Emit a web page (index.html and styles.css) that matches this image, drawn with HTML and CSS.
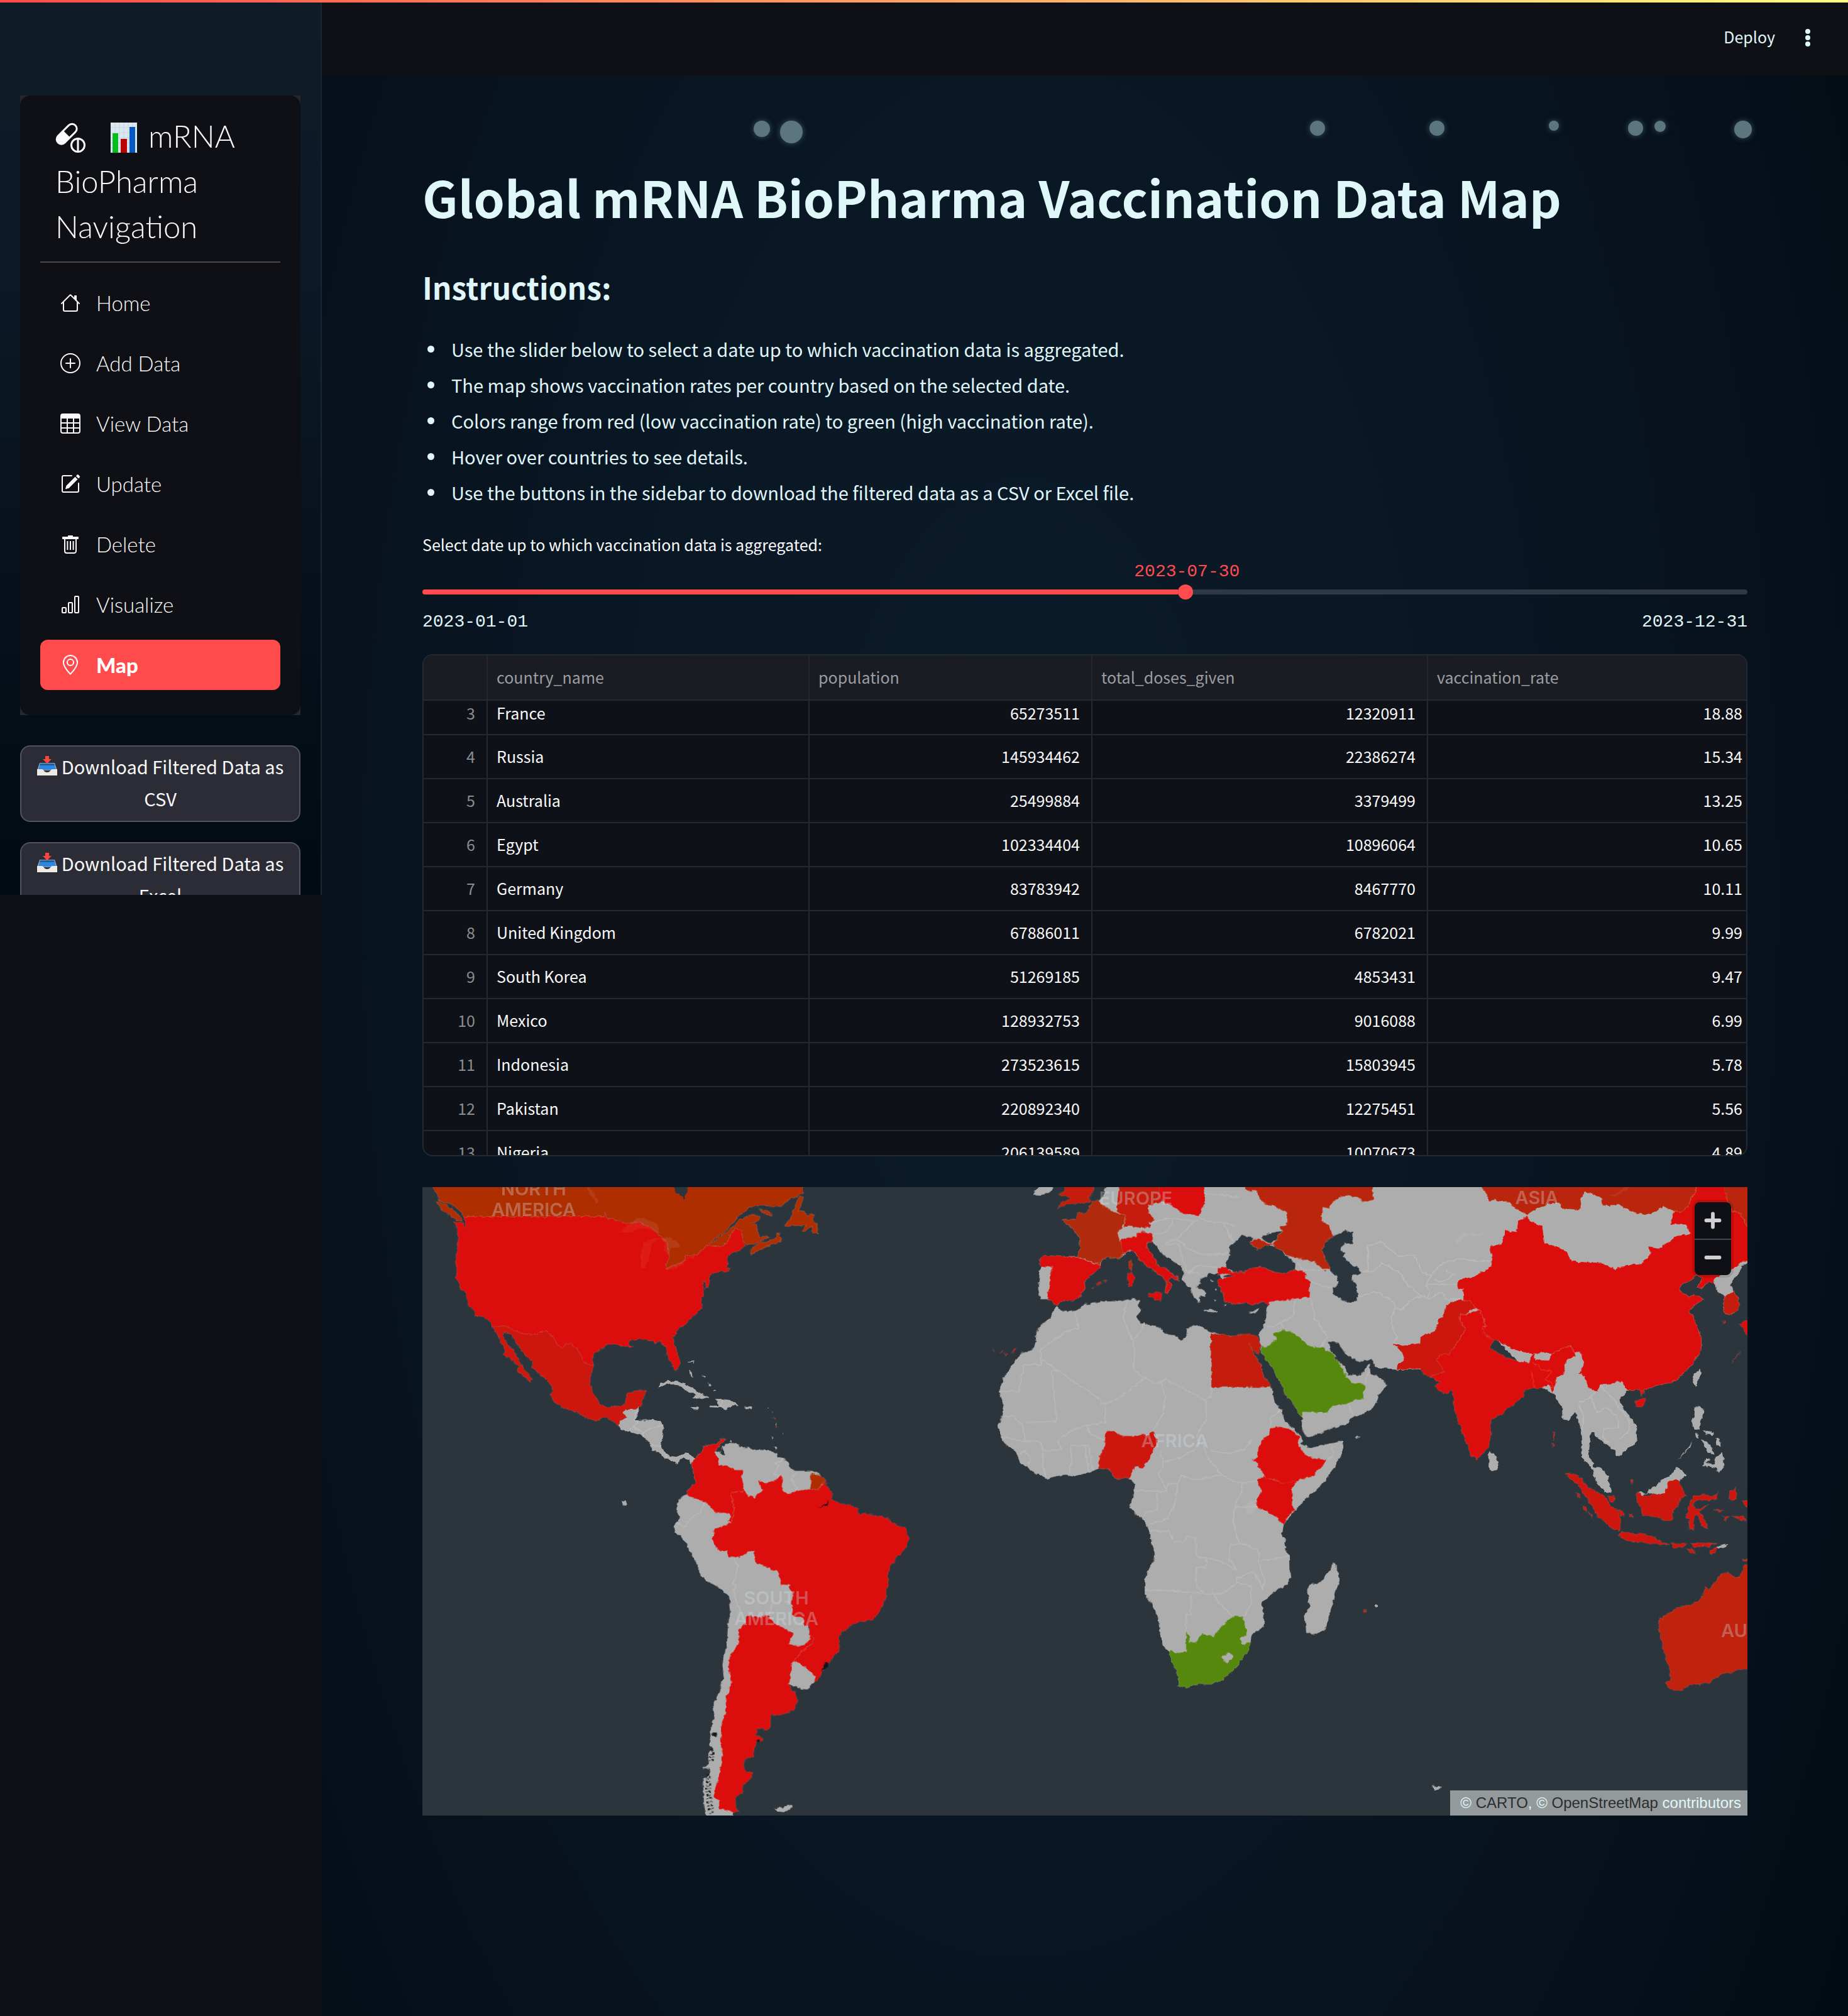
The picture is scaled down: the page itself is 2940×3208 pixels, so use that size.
FILE: index.html
```html
<!DOCTYPE html>
<html lang="en">
<head>
<meta charset="utf-8">
<title>Global mRNA BioPharma Vaccination Data Map</title>
<link rel="stylesheet" href="styles.css">
</head>
<body>
<svg class="defs" aria-hidden="true">
  <symbol id="tray" viewBox="0 0 32 32">
    <path d="M4 11h24l4 12H0z" fill="#8fa3b5"/>
    <path d="M5 12h22l3 10H2z" fill="#2f86dd"/>
    <path d="M5 12h22l1 3H4z" fill="#1d5ea6"/>
    <path d="M0 21h8c2 0 3 5 8 5s6-5 8-5h8v10H0z" fill="#eeebe6"/>
    <path d="M13 0h6v5h4l-7 7-7-7h4z" fill="#f8473c"/>
  </symbol>
</svg>
<div class="decoration"></div>
<div class="app">
  <aside class="sidebar">
    <div class="menu-frame">
      <nav class="menu">
        <h2 class="menu-title"><svg class="pill" viewBox="0 0 16 16" fill="currentColor"><path d="M11.02 5.364a3 3 0 0 0-4.242-4.243L1.121 6.778a3 3 0 1 0 4.243 4.243l5.657-5.657Zm-6.413-.657 2.878-2.879a2 2 0 1 1 2.829 2.829L7.435 7.536 4.607 4.707ZM12 8a4 4 0 1 1 0 8 4 4 0 0 1 0-8Zm-.5 1.042a3 3 0 0 0 0 5.917V9.042Zm1 5.917a3 3 0 0 0 0-5.917v5.917Z"/></svg><svg class="chart" viewBox="0 0 42 48"><rect width="42" height="48" fill="#dce8f0"/><path d="M0 8h42M0 16h42M0 24h42M0 32h42M0 40h42M7 0v48M14 0v48M21 0v48M28 0v48M35 0v48" stroke="#c5d6e2" fill="none"/><rect x="3" y="17" width="9" height="31" fill="#07bd1c"/><rect x="16" y="26" width="10" height="22" fill="#b90404"/><rect x="30" y="7" width="9" height="41" fill="#0558c4"/></svg>mRNA BioPharma Navigation</h2>
        <ul class="menu-list">
          <li><a href="#home"><svg viewBox="0 0 16 16"><path d="M2 13.5V7h1v6.5a.5.5 0 0 0 .5.5h9a.5.5 0 0 0 .5-.5V7h1v6.5a1.5 1.5 0 0 1-1.5 1.5h-9A1.5 1.5 0 0 1 2 13.5zm11-11V6l-2-2V2.5a.5.5 0 0 1 .5-.5h1a.5.5 0 0 1 .5.5z"/><path d="M7.293 1.5a1 1 0 0 1 1.414 0l6.647 6.646a.5.5 0 0 1-.708.708L8 2.207 1.354 8.854a.5.5 0 1 1-.708-.708L7.293 1.5z"/></svg>Home</a></li>
          <li><a href="#add"><svg viewBox="0 0 16 16"><path d="M8 15A7 7 0 1 1 8 1a7 7 0 0 1 0 14zm0 1A8 8 0 1 0 8 0a8 8 0 0 0 0 16z"/><path d="M8 4a.5.5 0 0 1 .5.5v3h3a.5.5 0 0 1 0 1h-3v3a.5.5 0 0 1-1 0v-3h-3a.5.5 0 0 1 0-1h3v-3A.5.5 0 0 1 8 4z"/></svg>Add Data</a></li>
          <li><a href="#view"><svg viewBox="0 0 16 16"><path d="M0 2a2 2 0 0 1 2-2h12a2 2 0 0 1 2 2v12a2 2 0 0 1-2 2H2a2 2 0 0 1-2-2V2zm15 2h-4v3h4V4zm0 4h-4v3h4V8zm0 4h-4v3h3a1 1 0 0 0 1-1v-2zm-5 3v-3H6v3h4zm-5 0v-3H1v2a1 1 0 0 0 1 1h3zm-4-4h4V8H1v3zm0-4h4V4H1v3zm5-3v3h4V4H6zm4 4H6v3h4V8z"/></svg>View Data</a></li>
          <li><a href="#update"><svg viewBox="0 0 16 16"><path d="M15.502 1.94a.5.5 0 0 1 0 .706L14.459 3.69l-2-2L13.502.646a.5.5 0 0 1 .707 0l1.293 1.293zm-1.75 2.456-2-2L4.939 9.21a.5.5 0 0 0-.121.196l-.805 2.414a.25.25 0 0 0 .316.316l2.414-.805a.5.5 0 0 0 .196-.12l6.813-6.814z"/><path d="M1 13.5A1.5 1.5 0 0 0 2.5 15h11a1.5 1.5 0 0 0 1.5-1.5v-6a.5.5 0 0 0-1 0v6a.5.5 0 0 1-.5.5h-11a.5.5 0 0 1-.5-.5v-11a.5.5 0 0 1 .5-.5H9a.5.5 0 0 0 0-1H2.5A1.5 1.5 0 0 0 1 2.5v11z"/></svg>Update</a></li>
          <li><a href="#delete"><svg viewBox="0 0 16 16"><path d="M6 1.500a.5.5 0 0 1 .5-.5h3a.5.5 0 0 1 .5.5V2H6z"/><path d="M3.500 4v9.500a1.500 1.500 0 0 0 1.500 1.500h6a1.500 1.500 0 0 0 1.500-1.500V4M2 2.500h12v1H2zM5.700 5.500v7M8 5.500v7M10.300 5.500v7" fill="none" stroke="currentColor" stroke-linejoin="round"/></svg>Delete</a></li>
          <li><a href="#visualize"><svg viewBox="0 0 16 16"><path d="M4 11H2v3h2v-3zm5-4H7v7h2V7zm5-5v12h-2V2h2zm-2-1a1 1 0 0 0-1 1v12a1 1 0 0 0 1 1h2a1 1 0 0 0 1-1V2a1 1 0 0 0-1-1h-2zM6 7a1 1 0 0 1 1-1h2a1 1 0 0 1 1 1v7a1 1 0 0 1-1 1H7a1 1 0 0 1-1-1V7zm-5 4a1 1 0 0 1 1-1h2a1 1 0 0 1 1 1v3a1 1 0 0 1-1 1H2a1 1 0 0 1-1-1v-3z"/></svg>Visualize</a></li>
          <li><a href="#map" class="active" aria-current="page"><svg viewBox="0 0 16 16"><path d="M12.166 8.94c-.524 1.062-1.234 2.12-1.96 3.07A31.493 31.493 0 0 1 8 14.58a31.481 31.481 0 0 1-2.206-2.57c-.726-.95-1.436-2.008-1.96-3.07C3.304 7.867 3 6.862 3 6a5 5 0 0 1 10 0c0 .862-.305 1.867-.834 2.94zM8 16s6-5.686 6-10A6 6 0 0 0 2 6c0 4.314 6 10 6 10z"/><path d="M8 8a2 2 0 1 1 0-4 2 2 0 0 1 0 4zm0 1a3 3 0 1 0 0-6 3 3 0 0 0 0 6z"/></svg>Map</a></li>
        </ul>
      </nav>
    </div>
    <button class="download" type="button"><svg class="tray"><use href="#tray"/></svg>Download Filtered Data as CSV</button>
    <button class="download" type="button"><svg class="tray"><use href="#tray"/></svg>Download Filtered Data as Excel</button>
  </aside>

  <div class="page">
    <header class="toolbar">
      <button type="button" class="deploy">Deploy</button>
      <button type="button" class="more" aria-label="Menu"><svg viewBox="0 0 8 28"><circle cx="4" cy="4" r="4"/><circle cx="4" cy="14" r="4"/><circle cx="4" cy="24" r="4"/></svg></button>
    </header>
    <main class="content">
      <div class="bubbles" aria-hidden="true">
        <i style="left:25%;width:26px;height:26px"></i><i style="left:27%;width:36px;height:36px"></i><i style="left:67%;width:24px;height:24px"></i><i style="left:76%;width:24px;height:24px"></i><i style="left:85%;width:16px;height:16px"></i><i style="left:91%;width:24px;height:24px"></i><i style="left:93%;width:18px;height:18px"></i><i style="left:99%;width:28px;height:28px"></i>
      </div>
      <h1>Global mRNA BioPharma Vaccination Data Map</h1>
      <h2 class="subhead">Instructions:</h2>
      <ul class="instructions">
        <li>Use the slider below to select a date up to which vaccination data is aggregated.</li>
        <li>The map shows vaccination rates per country based on the selected date.</li>
        <li>Colors range from red (low vaccination rate) to green (high vaccination rate).</li>
        <li>Hover over countries to see details.</li>
        <li>Use the buttons in the sidebar to download the filtered data as a CSV or Excel file.</li>
      </ul>

      <div class="slider">
        <label for="date">Select date up to which vaccination data is aggregated:</label>
        <output for="date" style="margin-left:57.7%">2023-07-30</output>
        <input id="date" type="range" min="0" max="364" value="210">
        <div class="ticks"><span>2023-01-01</span><span>2023-12-31</span></div>
      </div>

      <div class="grid">
        <table>
          <colgroup><col class="c-index"><col class="c-name"><col class="c-pop"><col class="c-doses"><col></colgroup>
          <thead><tr><th></th><th>country_name</th><th>population</th><th>total_doses_given</th><th>vaccination_rate</th></tr></thead>
          <tbody>
            <tr class="scrolled"><td>3</td><td>France</td><td>65273511</td><td>12320911</td><td>18.88</td></tr>
            <tr><td>4</td><td>Russia</td><td>145934462</td><td>22386274</td><td>15.34</td></tr>
            <tr><td>5</td><td>Australia</td><td>25499884</td><td>3379499</td><td>13.25</td></tr>
            <tr><td>6</td><td>Egypt</td><td>102334404</td><td>10896064</td><td>10.65</td></tr>
            <tr><td>7</td><td>Germany</td><td>83783942</td><td>8467770</td><td>10.11</td></tr>
            <tr><td>8</td><td>United Kingdom</td><td>67886011</td><td>6782021</td><td>9.99</td></tr>
            <tr><td>9</td><td>South Korea</td><td>51269185</td><td>4853431</td><td>9.47</td></tr>
            <tr><td>10</td><td>Mexico</td><td>128932753</td><td>9016088</td><td>6.99</td></tr>
            <tr><td>11</td><td>Indonesia</td><td>273523615</td><td>15803945</td><td>5.78</td></tr>
            <tr><td>12</td><td>Pakistan</td><td>220892340</td><td>12275451</td><td>5.56</td></tr>
            <tr><td>13</td><td>Nigeria</td><td>206139589</td><td>10070673</td><td>4.89</td></tr>
          </tbody>
        </table>
      </div>

      <div class="map">
        <svg class="world" viewBox="0 0 2108 1000" role="img" aria-label="Vaccination rates by country">
          <defs>
            <filter id="coast" x="0" y="0" width="2108" height="1000" filterUnits="userSpaceOnUse">
              <feTurbulence type="fractalNoise" baseFrequency=".14" numOctaves="2" seed="4"/>
              <feDisplacementMap in="SourceGraphic" scale="6" xChannelSelector="R" yChannelSelector="G"/>
            </filter>
          </defs>
          <g filter="url(#coast)">
            <!-- North and Central America -->
            <g transform="translate(-12 -9) scale(.5102 .3333)">
              <path class="canada" d="M45,0L60,45 74,60 72,90 95,100 115,110 130,130 145,145 152,168H590L592,152 598,175 630,185 650,198 680,200 698,193 730,215 752,240 772,270 788,300 793,360 780,400 785,418 815,400 845,380 848,355 878,352 908,310 962,308 975,290 985,250 1000,225 1018,232 1022,280 1032,300 1060,300 1072,290 1105,270 1100,262 1075,262 1065,230 1068,210 1045,200 1062,200 1075,185 1075,168 1060,157 1040,162 1010,185 990,215 975,240 940,275 916,303 935,275 970,240 988,205 1010,165 1030,145 1042,120 1085,116 1145,120 1160,90 1190,75 1210,55 1208,0ZM1048,355L1045,330 1058,308 1075,290 1105,285 1125,268 1130,245 1138,245 1135,265 1145,272 1140,290 1110,300 1085,320 1065,335ZM1200,70L1212,75 1205,110 1195,140 1215,145 1225,160 1245,155 1242,185 1255,200 1255,250 1240,245 1238,215 1215,240 1205,238 1220,210 1153,212 1170,180 1180,140 1190,95ZM1075,133L1100,140 1115,158 1108,163 1085,150ZM65,97L95,105 118,135 145,170 148,190 130,185 110,160 80,130Z"/>
              <path class="sea" d="M798,0L812,50 830,70 840,85 850,50 850,0Z"/>
              <path class="low" d="M122,192L152,198 158,225 160,205 152,168H590L592,152 598,175 630,185 650,198 680,200 698,193 730,215 752,240 772,270 788,300 793,360 780,400 785,418 815,400 845,380 848,355 878,352 908,310 962,308 975,290 985,250 1000,225 1018,232 1022,280 1032,310 1010,330 985,345 973,370 978,395 970,410 985,415 975,430 950,430 920,450 918,490 905,512 908,480 900,475 900,530 892,575 895,605 880,630 860,655 840,685 815,715 806,745 808,780 822,830 827,870 820,898 810,898 798,860 785,825 782,790 765,765 750,775 740,760 700,752 670,760 665,775 683,790 660,790 640,780 600,775 580,800 560,820 553,850 558,880 525,865 520,835 500,790 485,772 472,775 462,795 443,780 435,750 412,717H383V730H340L280,690 242,695 235,670 210,645 188,640 185,620 165,580 160,540 145,515 137,480 128,460 132,420 126,380 134,300 135,250 130,220Z"/>
              <path class="mexico" d="M242,695L280,690 340,730H383V717H412L435,750 443,780 462,795 472,775 485,772 500,790 520,835 525,865 558,880 550,920 547,970 560,1020 578,1060 600,1080 640,1070 658,1055 663,1010 685,997 720,995 718,1020 708,1050 705,1075 690,1088 655,1090 650,1105 662,1125 640,1140 636,1170 620,1150 600,1128 590,1128 568,1143 530,1125 480,1085 460,1080 430,1045 425,1020 430,995 420,965 400,930 365,885 365,860 345,830 325,790 310,760 305,735 280,718 275,735 290,780 310,810 325,860 345,905 365,945 360,960 345,935 320,905 325,880 290,840 275,825 285,815 268,770 255,725Z"/>
              <path class="none" d="M636,1170L640,1140 662,1125 650,1105 655,1090 690,1088 700,1073 697,1110 688,1140 740,1137 765,1145 777,1165 773,1210 767,1255 775,1285 795,1310 815,1315 845,1297 865,1310 872,1325 862,1350 850,1325 840,1315 825,1330 822,1350 812,1345 800,1330 780,1325 760,1290 738,1285 735,1258 710,1215 680,1200 645,1185ZM757,985L765,965 790,950 825,957 860,980 890,1010 918,1028 905,1037 865,1035 878,1020 850,1000 825,975 795,965ZM932,1038L960,1038 985,1045 1010,1068 985,1075 968,1090 955,1080 918,1078 920,1070 948,1070 942,1050ZM855,1077L880,1078 887,1086 870,1088ZM1030,1073L1053,1074 1050,1084 1030,1084ZM857,900L863,908 866,935 860,925ZM848,860L868,854 873,876 866,862ZM895,925l12,6-2,6zM915,960l8,14-5,0zM930,1005l8,-10 2,6zM1095,1080l8,2v5zM1112,1095l6,8v6zM1125,1150l3,12-3,0zM1115,1215l3,12-4,2zM645,1522l10,6 8,14-14,6zM983,1230l5,5-2,10-4,-4z"/>
              <path class="lake" d="M637,245L665,205 700,170 752,200 765,245 752,240 700,222 665,245ZM705,415L703,340 715,290 745,272 770,275 740,290 735,330 728,370 715,420ZM765,265L800,268 830,310 815,320 800,315 790,350 775,330 780,300ZM780,418L800,400 845,375 840,395 800,422ZM535,0L560,60 572,90 568,108 545,60 530,0ZM845,365L880,350 870,368Z"/>
              <path class="border" d="M692,1090L685,1140 695,1150 680,1170 710,1200 720,1190 745,1175 777,1160M738,1255L767,1265M780,1295L783,1322M960,1040L955,1080M680,1170L670,1190M712,1215V1195"/>
            </g>

            <!-- South America -->
            <g transform="translate(348 331) scale(.3333 .4337)">
              <path class="none" d="M240,255L255,232 290,210 298,190 330,182 360,178 385,160 400,160 398,168 378,178 365,195 355,210 380,205 383,190 400,185 430,175 468,180 470,190 520,193 550,200 600,202 645,212 650,225 685,235 705,250 710,265 740,280 810,280 850,288 870,312 840,400 800,700 800,850 835,1032 825,1052 795,1080 760,1078 708,1060 690,1100 600,1150 520,1250 440,1400 440,1500 440,1580 320,1580 300,1500 295,1410 320,1400 330,1370 295,1372 320,1350 320,1310 345,1300 325,1282 340,1200 350,1185 343,1135 360,1110 380,1070 393,1030 388,990 395,950 410,905 415,830 427,790 420,738 380,710 310,680 278,655 275,635 215,545 185,515 163,505 157,475 190,450 168,430 170,400 190,375 215,362 225,345 258,322 250,290ZM640,1520L660,1510 680,1515 700,1500 722,1505 710,1520 680,1530 650,1528ZM630,192l18,-2v12zM424,165l8,2-2,8zM677,138l6,4-4,2z"/>
              <path class="sea" d="M378,205L390,193 402,215 385,220Z"/>
              <path class="border" d="M168,470L210,482 230,455 280,430 302,400 295,388M440,597L460,625 450,670 435,690 455,695 440,720 460,770 480,800M685,235L640,250 660,258 635,290 665,298M738,285L718,310 750,350M680,755L710,760M612,805L625,765"/>
              <path class="low" d="M240,255L255,232 290,210 298,190 330,182 360,178 385,160 400,160 398,168 378,178 365,195 350,215 368,232 370,258 410,260 445,275 488,275 480,300 490,335 495,352 430,357 430,380 442,400 440,435 430,468 412,462 425,450 425,437 395,432 355,433 340,415 300,390 250,380 215,362 225,345 258,322 250,290Z"/>
              <path class="low" d="M430,357L495,352 515,370 540,375 585,348 570,340 558,312 600,322 655,305 668,295 677,320 672,345 700,365 740,352 805,345 845,347 880,312 885,335 912,360 910,385 950,395 985,402 1030,415 1045,440 1065,433 1130,445 1175,450 1210,475 1260,487 1277,530 1265,560 1220,595 1190,630 1178,650 1178,690 1170,730 1155,770 1130,800 1105,825 1050,830 1000,845 945,880 945,935 910,970 860,1020 840,1050 825,1052 833,1032 780,998 745,978 722,978 775,935 820,910 820,890 800,880 807,850 780,845 770,815 725,812 718,760 725,730 708,710 708,697 668,695 660,675 658,648 625,640 550,615 540,600 540,572 510,577 470,595 415,595 413,570 375,575 335,530 355,490 420,470 430,468 440,435 442,400 430,380Z"/>
              <path class="canada" d="M810,287L850,292 877,312 845,347 805,345 812,320 805,300ZM628,83l10,3 0,6zM642,110l6,6-4,4z"/>
              <path class="low" d="M520,805L565,815 568,822 575,810 605,810 640,838 725,875 705,913 745,920 775,918 800,900 805,880 820,890 820,910 775,935 722,978 712,1030 708,1060 712,1078 738,1090 735,1105 748,1120 730,1155 690,1168 615,1175 618,1215 600,1228 550,1222 550,1250 580,1255 580,1270 552,1270 540,1295 535,1325 500,1335 485,1360 500,1383 530,1385 525,1405 490,1430 482,1460 450,1475 450,1510 467,1532 372,1520 372,1485 345,1475 360,1435 385,1350 388,1310 380,1270 385,1200 405,1165 403,1120 418,1085 430,1050 415,1000 430,945 468,910 463,860 500,840 500,815Z"/>
              <path class="shadow" d="M858,1015L880,980 897,980 888,1000ZM550,1268l12,-6 6,6-10,6zM848,418L880,400 895,385 885,405ZM335,1240l30,0-12,15z"/>
              <path class="fjords" d="M338,1300L325,1345M320,1390L312,1440 318,1500 330,1540M330,1400L326,1460 340,1530M345,1310L340,1350"/>
            </g>

            <!-- Europe, Africa and the Middle East -->
            <g transform="translate(888 -9) scale(.44643 .33333)">
              <path class="none" d="M270,597L280,612 300,620 340,618 375,585 440,570 500,568 545,560 570,572 560,590 572,615 555,650 575,680 620,688 645,700 655,725 690,735 715,760 733,740 735,705 755,687 780,690 800,708 823,718 865,728 895,742 930,728 957,770 975,820 1000,880 1010,930 1035,980 1045,1050 1075,1095 1085,1150 1110,1170 1135,1210 1150,1240 1140,1250 1175,1275 1210,1260 1260,1248 1290,1238 1293,1270 1280,1315 1255,1375 1230,1425 1200,1470 1150,1525 1120,1570 1090,1620 1080,1640 1075,1680 1085,1720 1088,1760 1102,1785 1103,1850 1107,1890 1090,1925 1045,1960 1000,2015 1010,2060 1010,2125 965,2165 962,2200 955,2240 935,2270 910,2320 855,2385 820,2400 770,2400 730,2420 705,2405 703,2350 680,2290 670,2245 650,2220 640,2170 633,2085 610,2020 585,1965 585,1900 600,1850 620,1800 620,1770 608,1730 612,1715 595,1650 585,1625 545,1580 532,1547 545,1500 550,1450 540,1425 525,1415 480,1420 460,1375 425,1370 390,1385 335,1410 290,1400 235,1420 180,1380 140,1340 125,1290 80,1245 70,1210 62,1165 75,1130 82,1060 65,1005 80,945 115,870 140,825 190,795 198,755 195,735 210,690 250,650 262,610ZM1258,1820L1275,1860 1280,1905 1265,1960 1245,2060 1225,2145 1190,2165 1160,2150 1158,2110 1152,2075 1173,2030 1165,1950 1175,1925 1215,1910 1240,1860ZM1330,1220L1355,1220 1340,1228Z"/>
              <path class="none" d="M455,0L435,70 420,95 400,95 395,130 375,150 345,160 340,180 290,185 310,205 335,235 352,270 355,320 345,360 300,360 230,352 207,372 215,400 210,450 205,510 212,562 237,562 255,575 270,593 285,573 330,572 355,545 372,510 365,485 390,450 428,410 430,375 455,362 490,370 525,335 545,330 565,370 590,400 620,430 650,455 665,490 655,530 665,535 682,495 670,480 680,455 705,475 700,455 670,430 660,410 640,410 615,355 595,320 595,290 615,285 625,310 650,350 685,380 715,405 725,440 720,475 745,510 755,540 775,580 785,575 780,550 805,545 795,520 770,500 785,490 780,465 805,455 815,440 845,440 860,470 850,500 865,545 870,575 905,585 945,580 970,590 1010,572 1028,590 1018,605 1018,650 1005,700 990,735 998,790 1000,820 1030,870 1050,920 1075,970 1085,1020 1110,1050 1125,1090 1145,1125 1145,1180 1160,1218 1195,1212 1240,1185 1310,1155 1315,1135 1385,1095 1410,1060 1420,1020 1450,970 1425,935 1390,920 1385,870 1355,925 1310,925 1295,880 1275,860 1245,800 1240,765 1275,770 1300,825 1350,862 1395,847 1405,885 1485,900 1568,895V0ZM188,65L195,40 220,20 258,20 255,45 210,68ZM797,612L845,618 840,626 800,621ZM955,625L995,605 980,628 960,634ZM820,470l10,6-8,5zM835,510l8,6-6,5zM830,560l12,8-8,6zM865,590l12,-4-4,14z"/>
              <path class="sea" d="M930,255L905,290 890,305 888,350 873,390 880,420 905,433 940,433 970,412 1005,410 1040,432 1075,440 1120,425 1122,395 1090,355 1050,308 1015,305 985,325 960,292 975,272ZM1000,270L1020,250 1078,235 1060,258 1062,272 1035,292 1010,285ZM1255,262L1300,237 1328,242 1325,295 1295,297 1282,325 1300,345 1290,360 1325,405 1342,408 1357,438 1328,442 1320,470 1340,490 1343,570 1305,575 1258,545 1255,505 1275,490 1270,455 1250,430 1228,370 1215,325 1230,290ZM862,452L895,440 908,450 880,458Z"/>
              <path class="germany" d="M295,0L300,45 278,62 300,70 320,80 290,100 275,127 310,108 350,105 395,98 385,75 400,60 402,0ZM495,0H640L650,95 597,115 600,150 618,180 605,200 605,220 570,222 540,215 512,215 518,165 485,145 487,100Z"/>
              <path class="low" d="M636,0H797L800,100 780,162 720,155 695,125 655,100 636,60ZM497,280L530,265 555,265 560,245 585,240 612,255 615,285 595,290 595,320 615,355 640,410 660,410 670,430 700,455 705,475 680,455 670,480 682,495 665,535 655,530 665,490 650,455 620,430 590,400 565,370 550,335 530,328 510,348 500,320ZM597,535L648,530 642,572 600,550ZM522,440L540,432 548,460 540,500 525,503 525,470ZM207,372L230,352 300,360 345,362 400,390 428,397 428,410 390,450 365,485 372,510 355,545 330,572 285,573 270,593 255,575 237,560 245,500 247,440 258,410 215,405ZM413,488l18,-8 0,10-8,4zM440,475l8,-2-4,6zM395,505l6,0-2,6zM848,412L878,408 885,430 905,433 940,433 970,412 1005,410 1040,432 1075,440 1120,425 1158,430 1160,465 1175,480 1170,555 1130,558 1070,570 1028,575 1025,597 1010,572 970,590 945,580 905,585 870,575 865,545 850,500 845,470 870,460 905,450 880,438 845,450ZM66,815l12,-6 0,8zM86,822l8,2-4,6zM112,815l12,-20 4,0-8,16zM45,800l4,5-2,4z"/>
              <path class="france" d="M400,95L420,90 440,120 485,150 518,165 510,210 488,245 500,300 510,345 490,370 455,362 430,375 425,397 345,360 355,320 352,270 335,235 310,205 290,185 340,180 345,150 375,150ZM530,385L540,378 542,400 535,425 528,410Z"/>
              <path class="russia" d="M943,0L945,45 985,45 990,75 1012,110 1050,120 1092,150 1090,205 1065,215 1078,240 1060,258 1062,272 1040,300 1060,320 1095,355 1150,372 1195,390 1230,430 1247,410 1228,370 1215,325 1230,290 1255,262 1245,215 1213,185 1220,120 1245,130 1250,100 1300,65 1350,80 1360,100 1410,85 1440,105 1480,100 1478,75 1465,60 1468,0ZM960,292L988,270 1010,290 1045,298 1010,310 985,325ZM1367,2043h10v12h-10z"/>
              <path class="high" d="M1040,725L1080,708 1110,720 1175,790 1228,795 1232,808 1245,808 1275,860 1300,920 1320,958 1368,968 1372,985 1362,1035 1310,1058 1255,1070 1225,1110 1210,1103 1150,1100 1145,1125 1125,1090 1110,1050 1085,1020 1075,970 1050,920 1030,870 1000,820 1000,788 1022,790 1055,750Z"/>
              <path class="germany" d="M820,725L865,728 895,742 930,728 985,735 998,790 990,825 970,800 957,770 975,820 1000,880 1010,930 1038,982H822Z"/>
              <path class="mexico" d="M447,1197L475,1190 500,1215 545,1215 600,1205 615,1193 632,1240 600,1330 575,1368 550,1360 530,1415 480,1420 460,1375 422,1370 422,1315 440,1270Z"/>
              <path class="low" d="M1030,1180L1055,1170 1090,1175 1120,1195 1135,1220 1130,1255 1150,1290 1165,1310 1235,1333 1185,1405 1125,1430 1080,1442 1045,1420 1017,1420 985,1345 968,1330 987,1320 990,1270 1005,1230 1025,1215ZM985,1425L1010,1408 1020,1420 1045,1422 1080,1442 1125,1430 1110,1460 1110,1545 1120,1567 1095,1600 1080,1640 1050,1600 983,1550 985,1520 1002,1480Z"/>
              <path class="high" d="M670,2245L680,2235 690,2252 732,2245V2147L745,2175 745,2200 765,2200 790,2160 830,2172 860,2120 885,2090 905,2075 935,2080 947,2130 948,2172 930,2175 928,2200 940,2212 950,2200 963,2200 955,2240 935,2270 910,2320 855,2385 820,2400 770,2400 730,2420 705,2405 703,2350 680,2290Z"/>
              <path class="none" d="M860,2270L885,2248 902,2265 878,2303Z"/>
              <path class="lake" d="M945,1545L955,1525 985,1520 975,1590 945,1590Z"/>
              <path class="border" d="M337,622L350,700 305,715 215,800V875H155L137,1000H65M215,847L430,1045 432,1060 480,1045 585,940 555,915 545,870 550,800 540,750 508,655 522,570M580,675V700L545,755M585,940L630,965 660,943 803,1045V1140L770,1210 780,1260M822,982V1033H805M253,903H283M253,903L272,1145 160,1150M445,1058V1150L375,1165 395,1210 440,1235M643,960L657,1025 650,1110 615,1185M75,1120L115,1120 150,1165 160,1240 70,1218M1070,1088L1035,1130 1030,1180M160,1240L210,1240 225,1285 290,1280 275,1240 320,1190 375,1165M317,1260L390,1258M320,1262L325,1340 315,1390M370,1262L385,1380M385,1265L400,1380M225,1290L220,1350 235,1415M138,1300L160,1285 180,1320 170,1350M650,1340L710,1320 765,1280M640,1290L652,1345 635,1400 665,1480M550,1475L660,1480 668,1445 705,1440 715,1405 770,1425 860,1400 805,1310 795,1260M860,1400L885,1420 930,1440 980,1430M820,1285L880,1300 940,1280 965,1230M705,1440L690,1540 665,1610 600,1640M580,1600L590,1580 630,1570 630,1490M600,1668L670,1670 690,1720 720,1720 740,1695 765,1705 772,1795 805,1795 870,1820 908,1855 905,1830 885,1810 890,1735 925,1730M905,1560L900,1620 920,1720 990,1760M905,1555L985,1550M930,1440L930,1480 905,1555M1000,1810L1100,1790M990,1760L995,1850 1015,1900 1005,1945 990,1900 970,1860 915,1895 915,1915 965,1935 962,2020 938,2080M585,1950L705,1955 770,1965 860,1970 915,1915M805,1795L803,1843H768V1930L795,1960M750,1975V2070H732V2147M825,1960L850,2010 895,2075M1255,1265V1310L1235,1333"/>
              <path class="border" d="M800,55L925,75M780,165L800,190 860,195 905,215M600,200L670,175 775,190M680,175L685,205 650,250 615,250M760,190L700,275 660,290M700,275L740,320 790,350 885,345M860,190L900,285M655,300L705,300 720,370 735,430 780,440M740,440L770,400 845,410M1020,690L1040,695 1115,640 1118,570M1070,672L1080,708M1178,560L1190,650 1235,740 1215,790M1175,480L1250,510M1130,390L1150,425 1240,420M1380,430V305L1425,290 1490,355H1535M1310,1065L1328,1115M1370,965L1385,905"/>
            </g>

            <!-- Asia -->
            <g transform="translate(1488 -9) scale(.40816 .33333)">
              <path class="none" d="M60,0H1560V380L1500,400 1490,430 1450,490 1465,525 1485,560 1485,610 1455,635 1430,635 1425,580 1430,545 1400,530 1390,480 1365,480 1340,510 1325,505 1345,460 1320,445 1290,480 1260,495 1255,520 1290,555 1310,540 1350,560 1330,575 1290,620 1310,645 1325,700 1340,745 1338,810 1300,880 1270,920 1230,955 1170,975 1110,998 1060,995 1025,1030 1022,1060 1050,1105 1085,1160 1090,1245 1050,1275 1020,1315 1005,1310 1005,1285 970,1255 925,1215 922,1200 908,1200 905,1235 900,1330 875,1330 885,1280 870,1180 848,1100 820,1140 797,1135 797,1080 760,1010 720,985 500,700 245,893 150,898 65,885ZM1335,897L1337,920 1318,980 1305,955 1310,920Z"/>
              <path class="border" d="M40,430V308L92,290 160,358 218,352 242,405 250,435 285,445 320,400 345,382 400,370 515,385M20,432L60,430 95,390 160,432 200,500 250,548M0,550L60,530 80,530 140,575 145,608 175,608 215,560 250,548 275,560 330,525 345,565 405,560M145,608L130,650 140,720 155,740 140,773M290,445L265,490 280,520 275,560M265,490L385,492M300,470L330,480 375,445 340,425M860,1060L880,1120 875,1180M862,1055L910,1030 945,975M945,975L1000,1040 1020,1080 1058,1140 1058,1190 1020,1230M910,1030L930,1105 970,1080 1010,1120 1018,1175 960,1180 955,1220 980,1250"/>
              <path class="lake" d="M390,305L383,280 410,245 495,250 480,262 425,258 400,285Z"/>
              <path class="low" d="M660,165L668,185 720,215 728,295 780,312 815,335 835,383 945,388 1005,418 1060,398 1110,390 1140,350 1135,310 1175,318 1225,280 1240,262 1298,248 1280,210 1250,205 1218,205 1235,140 1260,148 1290,120 1295,85 1317,50 1315,0H1425L1440,90 1460,145 1490,150 1519,210 1560,230V380L1500,380 1460,420 1390,465 1390,480 1365,480 1340,510 1325,505 1345,460 1320,445 1290,480 1260,495 1255,520 1290,555 1310,540 1350,560 1330,575 1290,620 1310,645 1325,700 1340,745 1338,810 1300,880 1270,920 1230,955 1170,975 1110,998 1060,995 1040,985 1035,960 1010,950 985,970 945,968 935,1003 910,995 895,975 885,930 862,920 880,880 875,830 860,810 845,815 830,787 800,795 755,825 720,815 690,825 670,822 600,800 545,757 530,760 490,725 485,695 500,690 475,610 455,605 440,575 410,563 415,550 410,515 390,510 392,470 450,455 520,405 525,365 513,310 560,300 575,235 620,240 625,190ZM1080,1050L1105,1035 1123,1038 1110,1075 1090,1078ZM1100,990L1115,1005 1108,1022ZM765,1195l6,3-6,35-3,0zM758,1250l4,0 0,20z"/>
              <path class="russia" d="M475,0L515,97 530,85 555,100 590,97 610,125 660,160 700,130 760,100 790,110 795,130 860,135 872,125 868,80 885,48 950,80 955,115 1020,112 1075,150 1120,160 1160,145 1190,122 1235,140 1260,148 1290,120 1295,85 1317,50 1315,0ZM1420,0H1560V260L1519,210 1490,150 1460,145 1440,90Z"/>
              <path class="lake" d="M980,65L1005,60 1040,27 1070,15 1050,40 1005,72Z"/>
              <path class="low" d="M475,610L500,690 485,695 490,725 530,760 515,798 570,835 640,862 672,862 675,825 690,825 690,850 750,852 755,825 800,795 830,787 845,815 850,835 815,855 800,925 778,935 760,1010 745,970 720,985 670,990 650,1000 645,1025 600,1070 560,1110 520,1140 515,1170 520,1200 510,1270 480,1310 465,1328 445,1310 410,1200 380,1110 370,1000 335,1015 298,975 320,960 285,935 290,925 338,910 308,850 320,825 360,820 405,740 420,705 400,670 395,635 420,635 455,618ZM1560,645L1500,670 1490,685 1505,700 1510,730 1560,745ZM1422,670l14,-4 0,6-10,4zM1455,870L1490,812 1470,850Z"/>
              <path class="mexico" d="M138,773L170,785 243,772 245,740 300,715 318,655 335,650 345,590 370,570 415,565 440,575 455,605 420,635 395,635 400,670 420,705 405,740 360,820 320,825 308,850 338,910 290,925 285,935 265,930 245,893 150,898 158,870 182,855 175,820Z"/>
              <path class="germany" d="M1430,545L1465,525 1485,560 1485,610 1455,635 1430,635 1425,580Z"/>
              <path class="hot-border" d="M680,865L705,880 715,898 755,905 735,945 755,960 760,990M675,905L690,985"/>
            </g>

            <!-- South-East Asia and Australia -->
            <g transform="translate(1488 311) scale(.40816 .44643)">
              <path class="none" d="M512,245L535,255 550,290 545,310 520,317 510,300ZM870,160L905,200 893,250 912,280 920,300 945,302 975,335 990,395 965,392 925,350 915,310 895,285 875,275ZM1315,85L1345,88 1350,110 1335,140 1330,170 1310,165 1300,135 1312,120ZM1385,290L1400,265 1420,250 1430,295 1410,320 1395,305 1375,300 1345,298 1350,285ZM1245,278L1290,230 1305,205 1295,232ZM1315,180l15,5-2,15-8,-3zM1340,205l20,5 20,20 8,25-20,-5-15,-20zM1395,200l15,0 5,30-15,-10zM1345,170l40,5 0,12-25,-3zM1355,270l18,5-20,15zM1095,390L1110,405 1130,395 1130,378 1165,368 1185,345 1215,335 1245,300 1270,320 1285,330 1250,350 1215,350 1200,395 1150,398ZM1398,585L1443,575 1430,585 1402,593ZM292,1432L305,1442 327,1440 322,1452 295,1457ZM66,793h10v8h-10z"/>
              <path class="mexico" d="M1095,390L1110,405 1150,400 1195,395 1215,348 1250,347 1265,380 1280,405 1255,410 1250,440 1230,455 1225,490 1200,492 1170,480 1108,475 1105,445 1090,430 1085,400ZM813,322L860,332 900,375 965,405 985,440 1010,455 1025,485 1022,528 1000,525 945,485 920,450 890,410 860,365 820,338ZM1015,545L1030,532 1070,538 1120,540 1160,553 1185,568 1215,578 1180,578 1100,569 1050,564ZM1297,430L1307,406 1330,400 1385,406 1403,393 1395,417 1315,420 1305,440 1325,450 1365,436 1332,460 1357,495 1362,522 1340,508 1320,468 1310,478 1310,524 1290,524 1293,490 1280,475ZM1222,573L1280,573 1270,588 1230,588ZM1298,573L1360,575 1402,570 1370,583 1310,587ZM1283,593L1305,595 1320,610 1300,608ZM1372,600L1400,588 1398,600 1378,613ZM1450,390L1470,376 1474,412 1458,420 1448,410ZM1460,478L1500,476 1517,493 1490,489ZM1422,478L1444,480 1435,492ZM1500,422L1560,415V448L1510,440ZM1388,453L1425,456 1410,463ZM1010,452l20,5 10,18-15,2zM1058,470l13,0 0,10-13,0zM852,395l12,6 3,11-10,-4zM878,436l14,14 0,10-12,-8zM898,460l16,16 0,8zM1065,348l8,4-4,6zM975,405l25,2-5,20-12,-5z"/>
              <path class="australia" d="M1560,640L1519,650 1505,655 1490,695 1465,690 1440,675 1415,685 1395,710 1380,725 1370,740 1352,728 1345,755 1330,782 1285,795 1245,803 1215,820 1195,830 1188,845 1178,835 1172,870 1180,905 1188,940 1203,990 1218,1030 1218,1060 1203,1068 1210,1085 1240,1100 1265,1095 1295,1077 1370,1073 1385,1055 1420,1040 1455,1035 1485,1023 1560,1023ZM1500,630L1560,625V636H1502Z"/>
            </g>
          </g>
          <g class="place">
            <text x="177" y="13">NORTH</text><text x="177" y="46">AMERICA</text>
            <text x="563" y="664">SOUTH</text><text x="563" y="697">AMERICA</text>
            <text x="1135" y="28">EUROPE</text><text x="1197" y="414">AFRICA</text>
            <text x="1773" y="27">ASIA</text><text x="2087" y="716">AU</text>
          </g>
        </svg>
        <div class="zoom">
          <button type="button" aria-label="Zoom in"><svg viewBox="0 0 24 24"><path d="M12 3v18M3 12h18"/></svg></button>
          <button type="button" aria-label="Zoom out"><svg viewBox="0 0 24 24"><path d="M3 12h18"/></svg></button>
        </div>
        <div class="credits">© <a href="#carto">CARTO</a>, © <a href="#osm">OpenStreetMap</a> contributors</div>
      </div>
    </main>
  </div>
</div>
</body>
</html>
```

FILE: styles.css
```css
* { box-sizing: border-box; }

body {
  margin: 0;
  background: #0f1015;
  color: #e0f7fa;
  font-family: "Noto Sans CJK SC", "Noto Sans", sans-serif;
  font-size: 29px;
  line-height: 51px;
}

button { font: inherit; color: inherit; cursor: pointer; }
.defs { display: none; }

.decoration {
  position: absolute;
  top: 0;
  left: 0;
  right: 0;
  height: 4px;
  z-index: 2;
  background: linear-gradient(90deg, #ff4b4b, #fffd80);
}

.app {
  display: grid;
  grid-template-columns: 512px 1fr;
  min-height: 100vh;
}

/* Sidebar */
.sidebar {
  display: flex;
  flex-direction: column;
  gap: 32px;
  height: 1424px;
  overflow: hidden;
  padding: 152px 32px 0;
  border-right: 2px solid #1b2632;
  background: linear-gradient(#0f1c28, #0c1926 30%, #06101a 70%, #020b13);
}

.menu-frame { background: #262730; margin-bottom: 16px; }

.menu {
  min-height: 986px;
  padding: 28px 32px;
  border-radius: 16px;
  background: #0f1015;
  color: #fafafa;
  font-family: Lato, "Open Sans", sans-serif;
  font-weight: 300;
}

.menu-title {
  margin: 0 0 24px;
  padding: 0 24px 20px;
  border-bottom: 2px solid #4a4a4d;
  font-size: 49px;
  font-weight: inherit;
  line-height: 72px;
}
.menu-title svg { height: 48px; vertical-align: -8px; }
.pill { width: 48px; margin-right: 40px; }
.chart { width: 42px; margin-right: 18px; }

.menu-list {
  display: flex;
  flex-direction: column;
  gap: 16px;
  margin: 0;
  padding: 0;
  list-style: none;
}
.menu-list a {
  display: flex;
  align-items: center;
  gap: 25px;
  height: 80px;
  padding: 0 32px;
  border-radius: 12px;
  color: inherit;
  font-size: 33px;
  text-decoration: none;
}
.menu-list svg { width: 32px; height: 32px; fill: currentColor; }
.menu-list .active { background: #ff4b4b; color: #fff; font-weight: 900; }

.download {
  flex: none;
  padding: 6px 24px 10px;
  border: 2px solid #52525b;
  border-radius: 16px;
  background: #2b2c36;
  color: #fafafa;
}
.tray { width: 32px; height: 32px; margin-right: 7px; vertical-align: -3px; }

/* Toolbar */
.page { display: flex; flex-direction: column; min-width: 0; }
.toolbar {
  display: flex;
  align-items: center;
  justify-content: flex-end;
  gap: 48px;
  height: 120px;
  padding: 0 60px;
}
.toolbar button { padding: 0; border: 0; background: none; }
.toolbar .deploy { padding-bottom: 4px; font-size: 25px; }
.more { display: flex; }
.more svg { width: 8px; height: 28px; fill: #e0f7fa; }

/* Content */
.content {
  flex: 1;
  padding: 72px 160px 160px;
  background: radial-gradient(ellipse 66% 105% at 46% 42%, #0c1b29, #0a1826 35%, #07121d 72%, #020b13);
}

.bubbles { position: relative; height: 50px; }
.bubbles i {
  position: absolute;
  top: 0;
  border-radius: 50%;
  background: #5c7680;
  box-shadow: 0 0 10px #5c7680a0;
}

h1 {
  margin: 0;
  padding: 18px 0 41px;
  font-size: 79px;
  font-weight: 700;
  line-height: 106px;
}
.subhead {
  margin: 0 0 24px;
  padding: 16px 0;
  font-size: 48px;
  font-weight: 700;
  line-height: 67px;
}

.instructions {
  display: flex;
  flex-direction: column;
  gap: 6px;
  margin: 0 0 37px;
  padding: 0 0 0 8px;
  list-style: none;
}
.instructions li { display: flex; align-items: center; gap: 27px; }
.instructions li::before {
  content: "";
  width: 11px;
  height: 11px;
  border-radius: 50%;
  background: currentColor;
}

.slider { display: flex; flex-direction: column; }
.slider label { margin-bottom: 6px; color: #fafafa; font-size: 25px; line-height: 40px; }
.slider output {
  width: max-content;
  transform: translateX(-50%);
  color: #ff4b4b;
  font: 28px/36px "Liberation Mono", monospace;
}
.slider input {
  appearance: none;
  width: 100%;
  height: 24px;
  margin: 2px 0 20px;
  background: none;
}
.slider input::-webkit-slider-runnable-track {
  height: 8px;
  border-radius: 4px;
  background: linear-gradient(90deg, #ff4b4b 57%, #2f3945 57%);
}
.slider input::-webkit-slider-thumb {
  appearance: none;
  width: 24px;
  height: 24px;
  margin-top: -8px;
  border-radius: 50%;
  background: #ff4b4b;
}
.ticks {
  display: flex;
  justify-content: space-between;
  font: 28px/32px "Liberation Mono", monospace;
}

/* Data grid */
.grid {
  height: 799px;
  margin: 35px 0 49px;
  overflow: hidden;
  border: 2px solid #222a34;
  border-radius: 16px;
  background: #0e1117;
  color: #fafafa;
  font-size: 25px;
}
table {
  width: 100%;
  border-collapse: separate;
  border-spacing: 0;
  table-layout: fixed;
}
.c-index { width: 102px; }
.c-name { width: 512px; }
.c-pop { width: 450px; }
.c-doses { width: 534px; }
th, td {
  height: 70px;
  padding: 0 18px 2px 14px;
  border-right: 2px solid #26282e;
  border-bottom: 2px solid #26282e;
  line-height: 40px;
  text-align: right;
}
th {
  height: 72px;
  background: #1a1c24;
  color: #9c9da1;
  font-weight: 400;
  text-align: left;
}
td:first-child { color: #8b8c90; }
td:nth-child(2) { text-align: left; }
th:last-child, td:last-child { border-right: 0; padding-right: 6px; }
.scrolled td { height: 55px; line-height: 38px; vertical-align: top; }

/* Map */
.map { position: relative; }
.world { display: block; width: 100%; background: #2c343c; }
.world path { vector-effect: non-scaling-stroke; stroke: #ffffff14; stroke-width: 2px; }
.world .none { fill: #adadad; stroke: none; }
.world .sea { fill: #2c343c; stroke: none; }
.world .lake { fill: #ffffff10; stroke: none; }
.world .shadow { fill: #15181c; stroke: none; }
.world .border { fill: none; stroke: #b9b9b9; }
.world .hot-border { fill: none; stroke: #e5281f; }
.world .fjords { fill: none; stroke: #1b1f23; stroke-width: 4px; stroke-dasharray: 3 4 1 3; }
.low { fill: #db0d08; }
.mexico { fill: #cd1408; }
.germany { fill: #c61b08; }
.australia { fill: #bf2007; }
.russia { fill: #ba2607; }
.france { fill: #b22c07; }
.canada { fill: #af2f06; }
.high { fill: #56880b; }
.place {
  fill: #d7e6f050;
  font-family: Inter, sans-serif;
  font-size: 29px;
  font-weight: 600;
  text-anchor: middle;
}

.zoom {
  position: absolute;
  top: 24px;
  right: 26px;
  width: 58px;
  border-radius: 8px;
  background: #0f1015;
  box-shadow: 0 0 0 4px #0000001a;
}
.zoom button {
  display: grid;
  place-items: center;
  width: 100%;
  height: 58px;
  padding: 0;
  border: 0;
  background: none;
}
.zoom button + button { border-top: 2px solid #46474b; }
.zoom svg { width: 28px; height: 28px; fill: none; }
.zoom path { stroke: #d0d0d0; stroke-width: 5; stroke-linecap: round; }

.credits {
  position: absolute;
  right: 0;
  bottom: 0;
  padding: 0 10px 0 16px;
  background: #949a9c;
  font: 24px/40px "Liberation Sans", sans-serif;
}
.credits a { color: #2b2d2f; text-decoration: none; }
```
